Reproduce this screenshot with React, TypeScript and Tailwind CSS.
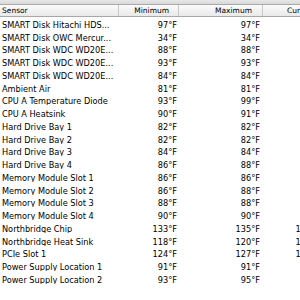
const rows: [string, string, string, string][] = [
  ["SMART Disk Hitachi HDS...", "97°F", "97°F", "97°F"],
  ["SMART Disk OWC Mercur...", "34°F", "34°F", "34°F"],
  ["SMART Disk WDC WD20E...", "88°F", "88°F", "88°F"],
  ["SMART Disk WDC WD20E...", "93°F", "93°F", "93°F"],
  ["SMART Disk WDC WD20E...", "84°F", "84°F", "84°F"],
  ["Ambient Air", "81°F", "81°F", "81°F"],
  ["CPU A Temperature Diode", "93°F", "99°F", "95°F"],
  ["CPU A Heatsink", "90°F", "91°F", "91°F"],
  ["Hard Drive Bay 1", "82°F", "82°F", "82°F"],
  ["Hard Drive Bay 2", "82°F", "82°F", "82°F"],
  ["Hard Drive Bay 3", "84°F", "84°F", "84°F"],
  ["Hard Drive Bay 4", "86°F", "88°F", "88°F"],
  ["Memory Module Slot 1", "86°F", "86°F", "86°F"],
  ["Memory Module Slot 2", "86°F", "88°F", "88°F"],
  ["Memory Module Slot 3", "88°F", "88°F", "88°F"],
  ["Memory Module Slot 4", "90°F", "90°F", "90°F"],
  ["Northbridge Chip", "133°F", "135°F", "134°F"],
  ["Northbridge Heat Sink", "118°F", "120°F", "119°F"],
  ["PCIe Slot 1", "124°F", "127°F", "126°F"],
  ["Power Supply Location 1", "91°F", "91°F", "91°F"],
  ["Power Supply Location 2", "93°F", "95°F", "95°F"],
];

export default function App() {
  return (
    <div
      className="w-[300px] h-[300px] overflow-hidden bg-white text-black"
      style={{ fontFamily: '"DejaVu Sans", "Liberation Sans", sans-serif' }}
    >
      {/* window strip */}
      <div className="h-[5px] bg-gradient-to-b from-[#e6e6e6] to-[#d9d9d9] border-b border-[#a9a9a9]" />

      {/* column header */}
      <div className="flex h-[12px] items-center bg-gradient-to-b from-[#fbfbfb] to-[#e9e9e9] border-b border-[#a8a8a8] text-[7.5px] leading-none whitespace-nowrap">
        <div className="w-[119px] shrink-0 pl-[2px] border-r border-[#c9c9c9] h-full flex items-center">Sensor</div>
        <div className="w-[60px] shrink-0 border-r border-[#c9c9c9] h-full flex items-center justify-end pr-[9px]">Minimum</div>
        <div className="w-[84px] shrink-0 border-r border-[#c9c9c9] h-full flex items-center justify-end pr-[10px]">Maximum</div>
        <div className="w-[60px] shrink-0 h-full flex items-center pl-[24px]">Current</div>
      </div>

      <div className="pt-[1.5px]">
        {rows.map(([name, min, max, cur], i) => (
          <div key={i} className="flex h-[12.75px] items-center text-[8.2px] leading-none whitespace-nowrap">
            <div className="w-[119px] shrink-0 pl-[2px] overflow-hidden">{name}</div>
            <div className="w-[60px] shrink-0 text-right pr-[2px]">{min}</div>
            <div className="w-[84px] shrink-0 text-right pr-[3px]">{max}</div>
            <div className="w-[60px] shrink-0 text-right pr-[3px]">{cur}</div>
          </div>
        ))}
      </div>
    </div>
  );
}
